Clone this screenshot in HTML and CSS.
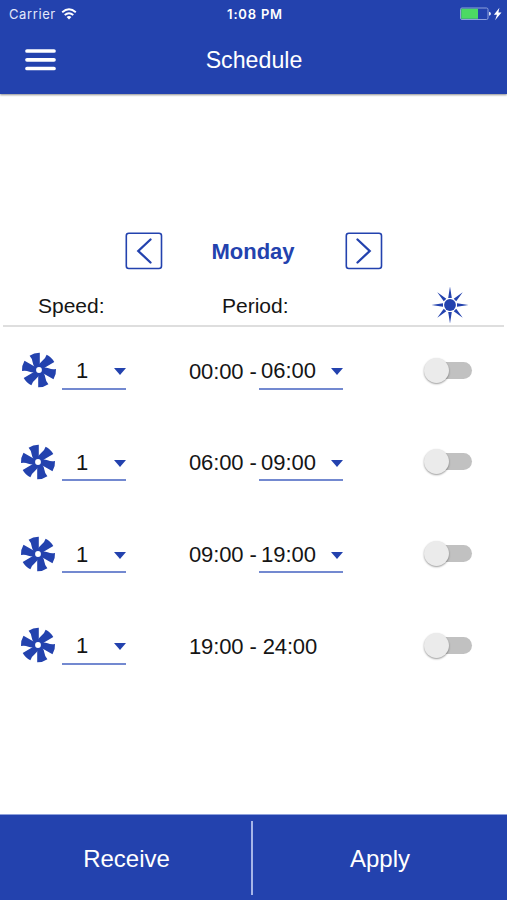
FILE: index.html
```html
<!DOCTYPE html>
<html lang="en">
<head>
<meta charset="utf-8">
<title>Schedule</title>
<link rel="stylesheet" href="styles.css">
</head>
<body>
<svg class="defs" width="0" height="0" aria-hidden="true">
  <defs>
    <path id="blade" d="M.8-17.200Q-5-17.300-9.400-14.200Q-6.800-11.500-6.300-7.500Q-5.800-4.500-4.200-2.500L.8-4Z"/>
    <symbol id="fan" viewBox="-18 -18 36 36">
      <g fill="#2342ae">
        <use href="#blade"/><use href="#blade" transform="rotate(60)"/><use href="#blade" transform="rotate(120)"/>
        <use href="#blade" transform="rotate(180)"/><use href="#blade" transform="rotate(240)"/><use href="#blade" transform="rotate(300)"/>
      </g>
      <circle r="4.300" fill="#fff" stroke="#2342ae" stroke-width="2.800"/>
    </symbol>
  </defs>
</svg>
<header class="top">
  <div class="status">
    <div class="carrier"><span>Carrier</span>
      <svg width="16" height="12" viewBox="0 0 16 12" fill="none" stroke="#fff" stroke-width="1.900"><path d="M1.200 4.300Q8-1.600 14.800 4.300M3.700 7Q8 3.400 12.300 7"/><path d="M5.600 9Q8 7 10.400 9L8 11.500Z" fill="#fff" stroke="none"/></svg>
    </div>
    <div class="clock">1:08 PM</div>
    <div class="power">
      <svg width="42" height="14" viewBox="0 0 42 14"><rect x=".5" y="1" width="27.500" height="11.500" rx="1.500" fill="none" stroke="#8ea0dc"/><path d="M1.200 1.700H18V11.800H1.200Z" fill="#4cd964"/><path d="M29 4.700Q31 5 31 6.700T29 8.700Z" fill="#dce2f6"/><path d="M39.400 .8L33.900 7.700H37L35.100 13.200L41.500 5.600H38.400Z" fill="#fff"/></svg>
    </div>
  </div>
  <div class="bar">
    <svg class="menu" width="31" height="22" viewBox="0 0 31 22" stroke="#fff" stroke-width="3.700" stroke-linecap="round"><path d="M2 2H29M2 10.800H29M2 19.500H29"/></svg>
    <h1>Schedule</h1>
  </div>
</header>
<main>
  <nav class="day">
    <svg width="38" height="38" viewBox="0 0 38 38" fill="none" stroke="#2342ae"><rect x="1.300" y="1.300" width="35.200" height="35.200" rx="2.500" stroke-width="1.600"/><path d="M25.500 7.500L13.300 19L25.500 30.500" stroke-width="2.300" stroke-linecap="round"/></svg>
    <strong>Monday</strong>
    <svg width="38" height="38" viewBox="0 0 38 38" fill="none" stroke="#2342ae"><rect x="1.300" y="1.300" width="35.200" height="35.200" rx="2.500" stroke-width="1.600"/><path d="M12.500 7.500L24.700 19L12.500 30.500" stroke-width="2.300" stroke-linecap="round"/></svg>
  </nav>
  <div class="heads">
    <span class="head">Speed:</span><span class="head">Period:</span>
    <svg class="sun" width="38" height="38" viewBox="-19 -19 38 38" fill="#2342ae"><circle r="5.900"/><path d="M-1.800-7L0-18.500L1.800-7ZM-1.800 7L0 18.500L1.800 7ZM7-1.800L18.500 0L7 1.800ZM-7-1.800L-18.500 0L-7 1.800Z"/><path transform="rotate(45)" d="M-1.800-7L0-18L1.800-7ZM-1.800 7L0 18L1.800 7ZM7-1.800L18 0L7 1.800ZM-7-1.800L-18 0L-7 1.800Z"/></svg>
  </div>
  <section class="rows">
    <div class="row first">
      <svg class="fan"><use href="#fan"/></svg>
      <div class="select speed"><span>1</span><i></i></div>
      <span class="from">00:00 -</span>
      <div class="select until"><span>06:00</span><i></i></div>
      <div class="switch"></div>
    </div>
    <div class="row">
      <svg class="fan"><use href="#fan"/></svg>
      <div class="select speed"><span>1</span><i></i></div>
      <span class="from">06:00 -</span>
      <div class="select until"><span>09:00</span><i></i></div>
      <div class="switch"></div>
    </div>
    <div class="row">
      <svg class="fan"><use href="#fan"/></svg>
      <div class="select speed"><span>1</span><i></i></div>
      <span class="from">09:00 -</span>
      <div class="select until"><span>19:00</span><i></i></div>
      <div class="switch"></div>
    </div>
    <div class="row">
      <svg class="fan"><use href="#fan"/></svg>
      <div class="select speed"><span>1</span><i></i></div>
      <span class="from">19:00 - 24:00</span>
      <div></div>
      <div class="switch"></div>
    </div>
  </section>
</main>
<footer><span>Receive</span><b></b><span>Apply</span></footer>
</body>
</html>
```

FILE: styles.css
```css
* { box-sizing: border-box; }
body {
  margin: 0;
  width: 507px;
  height: 900px;
  overflow: hidden;
  display: flex;
  flex-direction: column;
  background: #fff;
  color: #151515;
  font-family: "Liberation Sans", Arial, sans-serif;
}
svg { display: block; }
.defs { position: absolute; }
.top {
  height: 94px;
  flex: none;
  background: #2342ae;
  color: #fff;
  box-shadow: 0 1px 2px rgba(0, 0, 0, .45);
}
.status {
  height: 27px;
  display: grid;
  grid-template-columns: 1fr auto 1fr;
  align-items: center;
  padding: 0 5px 0 9px;
  font: 13px/27px Inter, sans-serif;
}
.carrier { display: flex; align-items: center; gap: 6px; color: #e2e8fa; letter-spacing: .6px; }
.carrier span, .clock { padding-top: 1px; }
.clock { font-weight: 600; font-size: 13px; letter-spacing: .8px; margin-right: 1px; }
.carrier svg { margin-left: -1px; }
.power { justify-self: end; }
.bar { height: 67px; display: grid; grid-template-columns: 120px 1fr 119px; align-items: center; }
.menu { margin: -1px 0 0 25px; }
h1 { margin: 0; font-size: 23.200px; line-height: 67px; font-weight: 400; text-align: center; }
main { flex: 1; padding-top: 138px; }
.day { height: 38px; display: flex; align-items: center; justify-content: space-between; width: 258px; margin-left: 125px; }
.day strong { color: #2342ae; font-size: 22px; line-height: 38px; padding: 2px 2px 0 0; }
.heads {
  height: 57px;
  margin: 0 3px;
  border-bottom: 2px solid #dedede;
  display: grid;
  grid-template-columns: 184px 245px 1fr;
  align-items: center;
  font-size: 21px;
  padding-top: 16px;
}
.head { padding-left: 35px; }
.sun { margin: -2px 0 0 -1px; }
.rows { margin-top: -1px; }
.row {
  height: 91.670px;
  display: grid;
  grid-template-columns: 42px 127px 70px 169px 44px;
  padding-left: 20px;
  align-items: center;
  font-size: 22px;
}
.fan { width: 36px; height: 36px; margin-top: -3px; }
.first .fan { margin-left: 1px; }
.from { white-space: nowrap; letter-spacing: -.12px; }
.select {
  height: 36px;
  border-bottom: 2px solid #7389d0;
  display: flex;
  align-items: center;
  justify-content: space-between;
  padding-top: 1px;
}
.speed { width: 64px; padding-left: 14px; }
.until { width: 84px; padding-left: 2px; }
.select i { border: 6.500px solid transparent; border-top: 7px solid #2342ae; border-bottom: 0; margin-top: 1px; }
.switch {
  position: relative;
  width: 44px;
  height: 17px;
  margin-top: -3px;
  border-radius: 9px;
  background: #c1c1c1;
}
.switch::before {
  content: "";
  position: absolute;
  left: -4px;
  top: -4px;
  width: 25px;
  height: 25px;
  border-radius: 50%;
  background: #ebebeb;
  box-shadow: 0 1px 2px rgba(0, 0, 0, .4);
}
footer {
  height: 86px;
  flex: none;
  background: #2342ae;
  border-top: 1px solid #8fa1dc;
  color: #fff;
  display: grid;
  grid-template-columns: 251px 2px 1fr;
  align-items: center;
  text-align: center;
  font-size: 24px;
}
footer span { padding-top: 2px; }
footer span:first-child { padding-left: 2px; }
footer b { height: 74px; background: #a6b5e8; }
```
